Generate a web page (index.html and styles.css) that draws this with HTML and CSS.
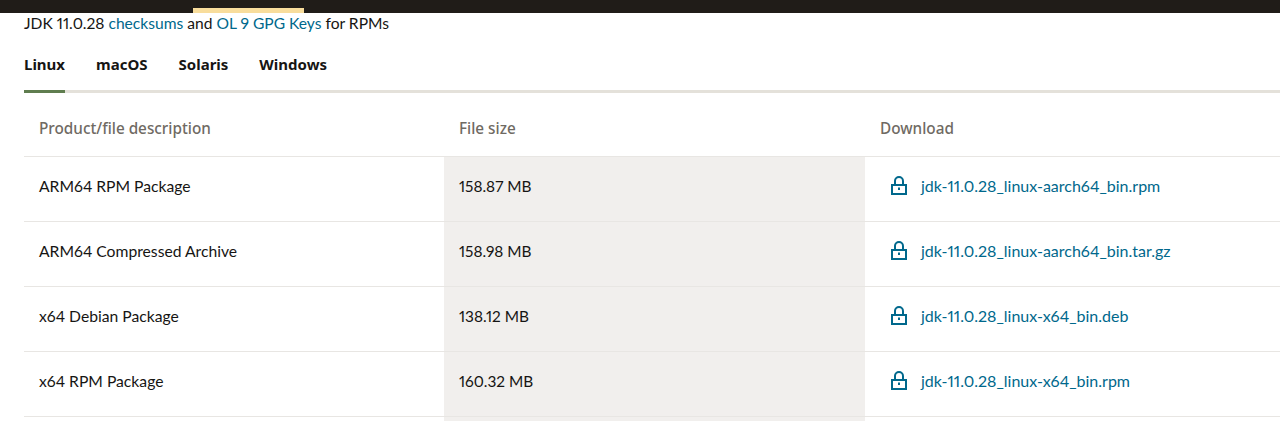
FILE: index.html
```html
<!DOCTYPE html>
<html lang="en">
<head>
<meta charset="utf-8">
<title>JDK 11 downloads</title>
<link rel="stylesheet" href="styles.css">
</head>
<body>
<header class="topbar"><span class="topbar-tab"></span></header>
<main class="content">
  <p class="intro">JDK 11.0.28 <a href="#">checksums</a> and <a href="#">OL 9 GPG Keys</a> for RPMs</p>
  <nav class="tabs">
    <a class="tab tab-active" href="#">Linux</a>
    <a class="tab" href="#">macOS</a>
    <a class="tab" href="#">Solaris</a>
    <a class="tab" href="#">Windows</a>
  </nav>
  <div class="table">
    <div class="row row-head">
      <div class="cell">Product/file description</div>
      <div class="cell">File size</div>
      <div class="cell">Download</div>
    </div>
    <div class="row">
      <div class="cell">ARM64 RPM Package</div>
      <div class="cell cell-size">158.87 MB</div>
      <div class="cell cell-dl"><svg class="lock" viewBox="0 0 16 19"><path d="M4 9V5a4 4 0 0 1 8 0v4M1 9h14v9H1z"/><path d="M8 11.5v2.5"/></svg><a href="#">jdk-11.0.28_linux-aarch64_bin.rpm</a></div>
    </div>
    <div class="row">
      <div class="cell">ARM64 Compressed Archive</div>
      <div class="cell cell-size">158.98 MB</div>
      <div class="cell cell-dl"><svg class="lock" viewBox="0 0 16 19"><path d="M4 9V5a4 4 0 0 1 8 0v4M1 9h14v9H1z"/><path d="M8 11.5v2.5"/></svg><a href="#">jdk-11.0.28_linux-aarch64_bin.tar.gz</a></div>
    </div>
    <div class="row">
      <div class="cell">x64 Debian Package</div>
      <div class="cell cell-size">138.12 MB</div>
      <div class="cell cell-dl"><svg class="lock" viewBox="0 0 16 19"><path d="M4 9V5a4 4 0 0 1 8 0v4M1 9h14v9H1z"/><path d="M8 11.5v2.5"/></svg><a href="#">jdk-11.0.28_linux-x64_bin.deb</a></div>
    </div>
    <div class="row">
      <div class="cell">x64 RPM Package</div>
      <div class="cell cell-size">160.32 MB</div>
      <div class="cell cell-dl"><svg class="lock" viewBox="0 0 16 19"><path d="M4 9V5a4 4 0 0 1 8 0v4M1 9h14v9H1z"/><path d="M8 11.5v2.5"/></svg><a href="#">jdk-11.0.28_linux-x64_bin.rpm</a></div>
    </div>
    <div class="row row-tail">
      <div class="cell"></div>
      <div class="cell cell-size"></div>
      <div class="cell"></div>
    </div>
  </div>
</main>
</body>
</html>
```
FILE: styles.css
```css
html, body {
  margin: 0;
  padding: 0;
  height: 421px;
  overflow: hidden;
  background: #fff;
}
body {
  font-family: Lato, "Noto Sans", sans-serif;
  font-size: 15.7px;
  font-variant-numeric: proportional-nums;
  color: #161513;
  box-sizing: border-box;
}
a {
  color: #00688c;
  text-decoration: none;
}
.topbar {
  height: 13px;
  background: #201c18;
  display: flex;
  align-items: flex-end;
  padding-left: 193px;
}
.topbar-tab {
  width: 111px;
  height: 5px;
  background: #f8dd9c;
}
.content {
  padding-left: 24px;
}
.intro {
  margin: 0;
  height: 21px;
  line-height: 20px;
  font-size: 15.6px;
}
.tabs {
  display: flex;
  gap: 31px;
  margin-top: 19px;
  height: 37px;
  border-bottom: 3px solid #e4e1da;
}
.tab {
  color: #161513;
  font-family: "Noto Sans", sans-serif;
  font-size: 15px;
  font-weight: 700;
  line-height: 23px;
  height: 37px;
}
.tab-active {
  border-bottom: 3px solid #5f7d4f;
}
.row {
  display: grid;
  grid-template-columns: 420px 421px 1fr;
  height: 64px;
  border-bottom: 1px solid #e8e6e3;
}
.row-head {
  height: 63px;
  color: #6f6a63;
  font-family: "Noto Sans", sans-serif;
  font-size: 15.3px;
  font-weight: 500;
}
.row-tail {
  border-bottom: 0;
  height: 10px;
}
.cell {
  display: flex;
  align-items: flex-start;
  padding: 19px 0 0 15px;
  line-height: 21px;
}
.row-head .cell {
  padding-top: 25px;
}
.cell-size {
  background: #f1efed;
  font-size: 15.4px;
}
.cell-dl {
  padding-left: 26px;
  padding-top: 18px;
  gap: 14px;
  font-size: 16px;
}
.lock {
  width: 16px;
  height: 19px;
  margin-top: 1px;
  flex: none;
  fill: none;
  stroke: #00688c;
  stroke-width: 2;
}
```
